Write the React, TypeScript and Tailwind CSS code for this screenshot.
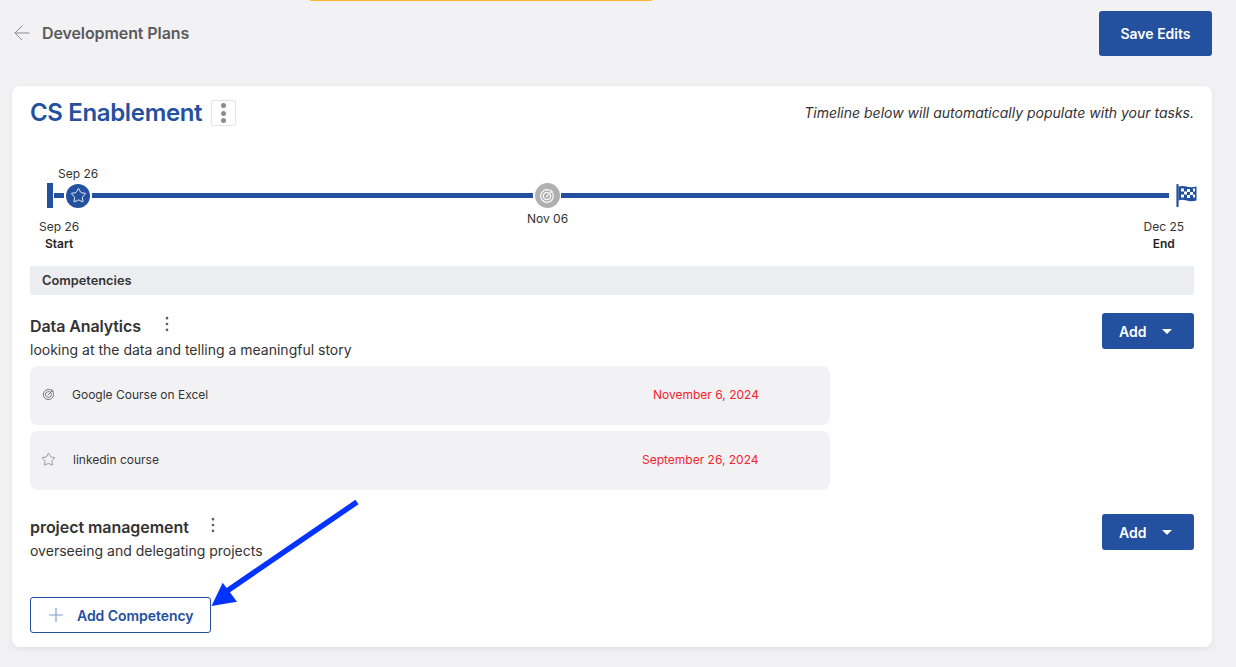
import React from "react";
import { ArrowLeft, EllipsisVertical, Plus, Star } from "lucide-react";

const RadarIcon = ({ className }: { className?: string }) => (
  <svg viewBox="0 0 24 24" fill="none" stroke="currentColor" strokeWidth="1.7" strokeLinecap="round" className={className}>
    <path d="M15.800 3.300A9.500 9.500 0 1 0 20.700 8.200" />
    <path d="M14.300 7A5.500 5.500 0 1 0 17 9.700" />
    <path d="M11 13 19 5" />
    <path d="M18 3v3h3" />
  </svg>
);

const FlagIcon = () => (
  <svg viewBox="0 0 21 23" className="h-[23px] w-[21px] shrink-0">
    <path d="M1.500 1v21" stroke="#23509f" strokeWidth="2.200" strokeLinecap="round" />
    <path d="M2.500 2.500c3-1 5.500-.6 8 .1s6 1 10-.1v14c-4 1.100-7 .8-10 0s-5-1.100-8-.1z" fill="#23509f" />
    <g fill="#fff">
      <rect x="5" y="4.500" width="3" height="3" />
      <rect x="11" y="5" width="3" height="3" />
      <rect x="17" y="4.500" width="2" height="3" />
      <rect x="8" y="7.500" width="3" height="3" />
      <rect x="14" y="8" width="3" height="3" />
      <rect x="5" y="10.500" width="3" height="3" />
      <rect x="11" y="11" width="3" height="3" />
      <rect x="17" y="10.500" width="2" height="3" />
    </g>
  </svg>
);

const AddButton = ({ className }: { className?: string }) => (
  <button type="button" className={`flex h-[36px] w-[92px] shrink-0 items-center rounded-[3px] bg-[#23509f] pl-[17px] text-[14px] font-semibold text-white ${className ?? ""}`}>
    Add
    <span className="ml-[16px] h-0 w-0 border-x-[5px] border-t-[5px] border-x-transparent border-t-white" />
  </button>
);

const TaskRow = ({ icon, title, date, titleClass }: { icon: React.ReactNode; title: string; date: string; titleClass: string }) => (
  <div className="flex h-[59px] w-[800px] items-center rounded-[8px] bg-[#f2f2f5] pb-[2px] pl-[12px] text-[12px] text-[#333333]">
    <span className="flex w-[13px] justify-center">{icon}</span>
    <span className={titleClass}>{title}</span>
    <span className="text-[#f5222d]">{date}</span>
  </div>
);

export default function App() {
  return (
    <div className="relative h-[667px] w-full overflow-hidden bg-[#f2f2f5] font-['Inter',sans-serif]">
      {/* sliver of the banner above the page */}
      <div className="absolute left-[310px] top-0 h-[1px] w-[342px] rounded-b bg-[#fbb62c]" />

      <header className="flex h-[86px] items-start justify-between pl-[10px] pr-[24px]">
        <div className="mt-[21px] flex items-center text-[#5a5a5a]">
          <ArrowLeft className="h-[24px] w-[24px] text-[#8c8c8c]" strokeWidth={1} />
          <span className="ml-[8px] text-[16px] font-semibold leading-[24px] tracking-[-0.1px]">Development Plans</span>
        </div>
        <button type="button" className="mt-[11px] h-[45px] w-[113px] rounded-[3px] bg-[#23509f] text-[14px] font-semibold text-white">
          Save Edits
        </button>
      </header>

      <main className="mx-[12px] h-[561px] w-[1200px] rounded-[8px] bg-white px-[18px] pt-[14px] shadow-[0_2px_6px_rgba(0,0,0,0.08)]">
        <div className="flex h-[26px] items-center justify-between">
          <div className="flex items-center">
            <h1 className="text-[24px] font-semibold leading-[26px] tracking-[-0.35px] text-[#23509f]">CS Enablement</h1>
            <span className="ml-[9px] flex h-[26px] w-[25px] flex-col items-center justify-center gap-[2.5px] rounded-[2px] border border-[#e4e4e7]">
              <i className="h-[5px] w-[5px] rounded-full bg-[#8c8c8c]" />
              <i className="h-[5px] w-[5px] rounded-full bg-[#8c8c8c]" />
              <i className="h-[5px] w-[5px] rounded-full bg-[#8c8c8c]" />
            </span>
          </div>
          <p className="mb-[2px] text-[14px] italic text-[#333333]">Timeline below will automatically populate with your tasks.</p>
        </div>

        {/* timeline */}
        <section className="relative mt-[40px] h-[100px]">
          <div className="flex items-center pt-[17px]">
            <span className="ml-[17px] h-[25px] w-[6px] shrink-0 bg-[#23509f]" />
            <span className="ml-[1px] h-[5px] w-[10px] shrink-0 bg-[#23509f]" />
            <span className="ml-[2px] flex h-[24px] w-[24px] shrink-0 items-center justify-center rounded-full bg-[#23509f]">
              <Star className="h-[17px] w-[17px] text-white" strokeWidth={1.25} />
            </span>
            <span className="ml-[2px] h-[5px] w-[441px] shrink-0 bg-[#23509f]" />
            <span className="ml-[1.5px] flex h-[25px] w-[25px] shrink-0 items-center justify-center rounded-full bg-[#b0b0b0]">
              <RadarIcon className="h-[16px] w-[16px] text-white" />
            </span>
            <span className="ml-[1.5px] h-[5px] w-[608px] shrink-0 bg-[#23509f]" />
            <span className="ml-[7px]"><FlagIcon /></span>
          </div>
          <span className="absolute left-[28px] top-0 text-[12px] leading-[16px] text-[#333333]">Sep 26</span>
          <div className="absolute left-[9px] top-[52px] text-center text-[12px] leading-[17px] text-[#333333]">
            Sep 26
            <div className="font-semibold text-[#1f1f1f]">Start</div>
          </div>
          <span className="absolute left-[497px] top-[45px] text-[12px] leading-[16px] text-[#333333]">Nov 06</span>
          <div className="absolute right-[10px] top-[52px] text-center text-[12px] leading-[17px] text-[#333333]">
            Dec 25
            <div className="font-semibold text-[#1f1f1f]">End</div>
          </div>
        </section>

        <div className="flex h-[29px] items-center bg-[#ecedf1] pl-[12px] text-[12.8px] font-semibold text-[#333333]">Competencies</div>

        <section className="mt-[18px] flex items-start justify-between">
          <div>
            <div className="mt-[3px] flex h-[21px] items-center">
              <h2 className="text-[16px] font-semibold leading-[21px] tracking-[-0.1px] text-[#333333]">Data Analytics</h2>
              <EllipsisVertical className="-mt-[5px] ml-[16px] h-[20px] w-[20px] text-[#555555]" strokeWidth={1.25} />
            </div>
            <p className="mt-[3px] text-[14px] leading-[20px] text-[#333333]">looking at the data and telling a meaningful story</p>
            <div className="mt-[6px] flex flex-col gap-[6px]">
              <TaskRow
                icon={<RadarIcon className="h-[15px] w-[15px] text-[#707070]" />}
                title="Google Course on Excel"
                date="November 6, 2024"
                titleClass="ml-[17px] w-[581px]"
              />
              <TaskRow
                icon={<Star className="h-[15px] w-[15px] shrink-0 text-[#707070]" strokeWidth={1.1} />}
                title="linkedin course"
                date="September 26, 2024"
                titleClass="ml-[18px] w-[569px]"
              />
            </div>
          </div>
          <AddButton />
        </section>

        <section className="mt-[24px] flex items-start justify-between">
          <div>
            <div className="mt-[3px] flex h-[21px] items-center">
              <h2 className="text-[16px] font-semibold leading-[21px] tracking-[-0.05px] text-[#333333]">project management</h2>
              <EllipsisVertical className="-mt-[5px] ml-[14px] h-[20px] w-[20px] text-[#555555]" strokeWidth={1.25} />
            </div>
            <p className="mt-[3px] text-[14px] leading-[20px] text-[#333333]">overseeing and delegating projects</p>
          </div>
          <AddButton />
        </section>

        <button type="button" className="mt-[36px] flex h-[36px] w-[181px] items-center rounded-[3px] border border-[#23509f] pl-[14px] text-[14px] font-semibold tracking-[-0.05px] text-[#23509f]">
          <Plus className="h-[22px] w-[22px] text-[#7f9bc9]" strokeWidth={1.25} />
          <span className="ml-[10px]">Add Competency</span>
        </button>
      </main>

      {/* annotation arrow drawn over the page */}
      <svg className="absolute left-[205px] top-[495px] h-[115px] w-[160px]" viewBox="0 0 160 115">
        <path d="M152 7 L22 96" stroke="#0433ff" strokeWidth="5.500" />
        <path d="M6.500 111 L17.700 87.700 L32 106.700 Z" fill="#0433ff" />
      </svg>
    </div>
  );
}
